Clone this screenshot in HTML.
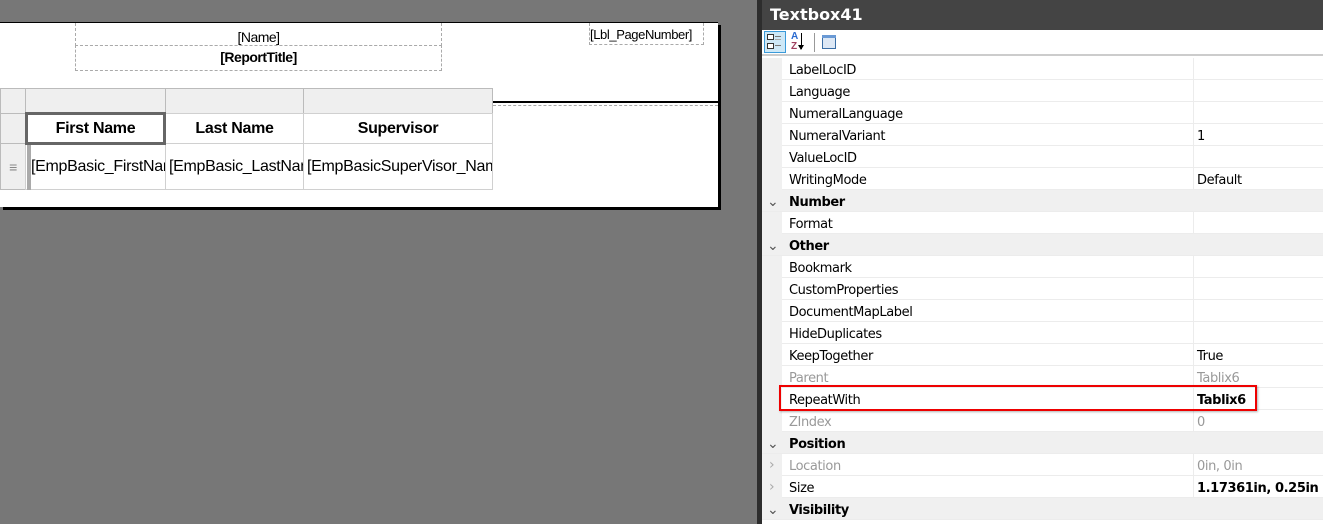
<!DOCTYPE html>
<html><head><meta charset="utf-8">
<style>
*{margin:0;padding:0;box-sizing:border-box}
body{width:1323px;height:524px;overflow:hidden;background:#777;position:relative;font-family:"Liberation Sans",sans-serif}
.a{position:absolute}
.page{left:0;top:22px;width:718px;height:185px;background:#fff;border-top:1px solid #000;box-shadow:3px 3px 0 #000}
.dot{border:1px dashed #aaa}
.t{font-size:14px;color:#000;text-align:center;letter-spacing:-0.5px}
.cell{position:absolute;border:1px solid #d0d0d0;font-size:16px;display:flex;align-items:center;white-space:nowrap;overflow:hidden;letter-spacing:-0.3px}
.panel{left:762px;top:0;width:561px;height:524px;background:#fff}
.row{position:absolute;left:0;width:561px;height:22px;border-bottom:1px solid #ececec;font-family:"DejaVu Sans","Liberation Sans",sans-serif;font-size:13px;letter-spacing:-0.4px}
.row .n{position:absolute;left:27px;top:5px}
.row .v{position:absolute;left:435px;top:5px}
.row .m{position:absolute;left:0;top:0;width:20px;height:22px;background:#f0f0f0}
.row .c{position:absolute;left:431px;top:0;height:22px;border-left:1px solid #ececec}
.cat{background:#f0f0f0;font-weight:bold}
.g{color:#999}
.ch{position:absolute;left:5px;top:4px;color:#555;font-size:14px;font-weight:normal}
.ar{position:absolute;left:7px;top:3px;color:#aaa;font-size:14px}
</style></head><body>
<div class="a page">
  <div class="a dot" style="left:75px;top:0;width:367px;height:23px;border-top:none"></div>
  <div class="a t" style="left:75px;top:6px;width:367px;height:16px;overflow:hidden">[Name]</div>
  <div class="a dot" style="left:75px;top:22px;width:367px;height:26px"></div>
  <div class="a t" style="left:75px;top:26px;width:367px;font-weight:bold">[ReportTitle]</div>
  <div class="a dot" style="left:589px;top:0;width:115px;height:22px;border-top:none"></div>
  <div class="a" style="left:590px;top:4px;font-size:13px;letter-spacing:-0.4px">[Lbl_PageNumber]</div>
  <div class="a" style="left:493px;top:78px;width:225px;height:2px;background:#000"></div>
  <div class="a" style="left:493px;top:82px;width:225px;border-top:1px dashed #aaa"></div>
</div>
<div class="cell" style="left:0;top:88px;width:26px;height:26px;background:#efefef;border-color:#bbb"></div>
<div class="cell" style="left:25px;top:88px;width:141px;height:26px;background:#efefef;border-color:#bbb"></div>
<div class="cell" style="left:165px;top:88px;width:139px;height:26px;background:#efefef;border-color:#bbb"></div>
<div class="cell" style="left:303px;top:88px;width:190px;height:26px;background:#efefef;border-color:#bbb"></div>
<div class="cell" style="left:0;top:113px;width:26px;height:31px;background:#efefef;border-color:#bbb"></div>
<div class="cell" style="left:0;top:143px;width:26px;height:47px;background:#efefef;border-color:#bbb;justify-content:center;color:#888;font-size:14px">≡</div>
<div class="cell" style="left:165px;top:113px;width:139px;height:31px;justify-content:center;font-weight:bold">Last Name</div>
<div class="cell" style="left:303px;top:113px;width:190px;height:31px;justify-content:center;font-weight:bold">Supervisor</div>
<div class="cell" style="left:25px;top:143px;width:141px;height:47px;padding-left:5px">[EmpBasic_FirstName]</div>
<div class="cell" style="left:165px;top:143px;width:139px;height:47px;padding-left:3px">[EmpBasic_LastName]</div>
<div class="cell" style="left:303px;top:143px;width:190px;height:47px;padding-left:3px">[EmpBasicSuperVisor_Name]</div>
<div class="a" style="left:27px;top:144px;width:4px;height:46px;background:#aaa"></div>
<div class="cell" style="left:25px;top:112px;width:141px;height:33px;border:3px solid #666;justify-content:center;font-weight:bold;background:#fff">First Name</div>
<div class="a" style="left:757px;top:0;width:5px;height:524px;background:#2d2d2d"></div>
<div class="a panel">
  <div class="a" style="left:0;top:0;width:561px;height:30px;background:#444;color:#fff;font-family:'DejaVu Sans',sans-serif;font-weight:bold;font-size:16px;padding:5px 0 0 8px">Textbox41</div>
  <div class="a" style="left:0;top:30px;width:561px;height:26px;border-bottom:2px solid #ccc;background:#fff">
    <div class="a" style="left:2px;top:1px;width:22px;height:22px;background:#cde8f7;border:1px solid #3a9ad9"></div>
    <div class="a" style="left:5px;top:4px;width:7px;height:6px;border:1px solid #333;background:#fff"></div>
    <div class="a" style="left:5px;top:13px;width:7px;height:6px;border:1px solid #333;background:#fff"></div>
    <div class="a" style="left:13px;top:6px;width:6px;height:1px;background:#777"></div>
    <div class="a" style="left:13px;top:9px;width:6px;height:1px;background:#aaa"></div>
    <div class="a" style="left:13px;top:15px;width:6px;height:1px;background:#777"></div>
    <div class="a" style="left:29px;top:2px;font-size:10px;line-height:10px;font-weight:bold"><span style="color:#2a6ad0">A</span><br><span style="color:#a04060">Z</span></div>
    <div class="a" style="left:39px;top:3px;width:1px;height:16px;background:#000"></div>
    <div class="a" style="left:36px;top:15px;width:0;height:0;border-left:3.5px solid transparent;border-right:3.5px solid transparent;border-top:5px solid #000"></div>
    <div class="a" style="left:52px;top:3px;width:1px;height:19px;background:#999"></div>
    <div class="a" style="left:60px;top:5px;width:14px;height:14px;border:1px solid #3a6ea5;background:#dde8f5"></div>
    <div class="a" style="left:60px;top:5px;width:14px;height:3px;background:#6a9ad5"></div>
  </div>
  <div class="row" style="top:58px"><div class="m"></div><span class="n">LabelLocID</span><div class="c"></div></div>
  <div class="row" style="top:80px"><div class="m"></div><span class="n">Language</span><div class="c"></div></div>
  <div class="row" style="top:102px"><div class="m"></div><span class="n">NumeralLanguage</span><div class="c"></div></div>
  <div class="row" style="top:124px"><div class="m"></div><span class="n">NumeralVariant</span><div class="c"></div><span class="v">1</span></div>
  <div class="row" style="top:146px"><div class="m"></div><span class="n">ValueLocID</span><div class="c"></div></div>
  <div class="row" style="top:168px"><div class="m"></div><span class="n">WritingMode</span><div class="c"></div><span class="v">Default</span></div>
  <div class="row cat" style="top:190px"><span class="ch">⌄</span><span class="n">Number</span></div>
  <div class="row" style="top:212px"><div class="m"></div><span class="n">Format</span><div class="c"></div></div>
  <div class="row cat" style="top:234px"><span class="ch">⌄</span><span class="n">Other</span></div>
  <div class="row" style="top:256px"><div class="m"></div><span class="n">Bookmark</span><div class="c"></div></div>
  <div class="row" style="top:278px"><div class="m"></div><span class="n">CustomProperties</span><div class="c"></div></div>
  <div class="row" style="top:300px"><div class="m"></div><span class="n">DocumentMapLabel</span><div class="c"></div></div>
  <div class="row" style="top:322px"><div class="m"></div><span class="n">HideDuplicates</span><div class="c"></div></div>
  <div class="row" style="top:344px"><div class="m"></div><span class="n">KeepTogether</span><div class="c"></div><span class="v">True</span></div>
  <div class="row g" style="top:366px"><div class="m"></div><span class="n">Parent</span><div class="c"></div><span class="v">Tablix6</span></div>
  <div class="row" style="top:388px"><div class="m"></div><span class="n">RepeatWith</span><div class="c"></div><span class="v" style="font-weight:bold">Tablix6</span></div>
  <div class="row g" style="top:410px"><div class="m"></div><span class="n">ZIndex</span><div class="c"></div><span class="v">0</span></div>
  <div class="row cat" style="top:432px"><span class="ch">⌄</span><span class="n">Position</span></div>
  <div class="row g" style="top:454px"><div class="m"><span class="ar">›</span></div><span class="n">Location</span><div class="c"></div><span class="v">0in, 0in</span></div>
  <div class="row" style="top:476px"><div class="m"><span class="ar">›</span></div><span class="n">Size</span><div class="c"></div><span class="v" style="font-weight:bold">1.17361in, 0.25in</span></div>
  <div class="row cat" style="top:498px"><span class="ch">⌄</span><span class="n">Visibility</span></div>
  <div class="a" style="left:17px;top:385px;width:478px;height:26px;border:2px solid #e00;box-shadow:1px 1px 2px rgba(0,0,0,.3)"></div>
</div>
</body></html>
